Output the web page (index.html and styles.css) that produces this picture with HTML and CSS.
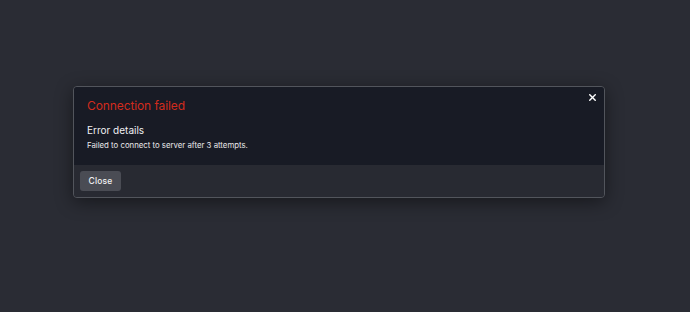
FILE: index.html
```html
<!DOCTYPE html>
<html>
<head>
<meta charset="utf-8">
<link rel="stylesheet" href="styles.css">
</head>
<body>
<div class="page">
  <div class="dialog">
    <div class="dialog-body">
      <button class="dismiss" aria-label="Close">
        <svg width="7" height="7" viewBox="0 0 7 7"><path d="M0.8 0.8L6.2 6.2M6.2 0.8L0.8 6.2" stroke="#fff" stroke-width="1.4" stroke-linecap="square"/></svg>
      </button>
      <div class="title">Connection failed</div>
      <div class="subtitle">Error details</div>
      <div class="message">Failed to connect to server after 3 attempts.</div>
    </div>
    <div class="dialog-footer">
      <button class="btn">Close</button>
    </div>
  </div>
</div>
</body>
</html>
```

FILE: styles.css
```css
html, body {
  margin: 0;
  height: 100%;
  background: #2a2c34;
  font-family: "Inter", "Noto Sans", sans-serif;
}
.page {
  padding: 86px 0 0 73px;
}
.dialog {
  width: 530px;
  border: 1px solid #52555c;
  border-radius: 4px;
  overflow: hidden;
  box-shadow: 0 4px 18px rgba(0,0,0,0.45);
}
.dialog-body {
  position: relative;
  background: #181b25;
  padding: 11px 13px 13px 13px;
  height: 54px;
}
.dismiss {
  position: absolute;
  top: 5px;
  right: 6px;
  width: 11px;
  height: 11px;
  padding: 0;
  border: 0;
  background: none;
  display: flex;
  align-items: center;
  justify-content: center;
}
.title {
  color: #d22b1d;
  font-size: 12px;
  line-height: 16px;
  letter-spacing: -0.1px;
}
.subtitle {
  margin-top: 10px;
  color: #f1f1f3;
  font-size: 10px;
  line-height: 13px;
}
.message {
  margin-top: 3px;
  color: #e8e8ea;
  font-size: 7.8px;
  line-height: 11px;
}
.dialog-footer {
  background: #282a32;
  padding: 6px 6px 6px 6px;
}
.btn {
  display: block;
  background: #4a4c54;
  color: #f0f0f2;
  border: 0;
  border-radius: 3px;
  font-family: inherit;
  font-size: 8.5px;
  font-weight: 500;
  width: 41px;
  height: 20px;
  padding: 0;
  letter-spacing: 0.2px;
}
```
